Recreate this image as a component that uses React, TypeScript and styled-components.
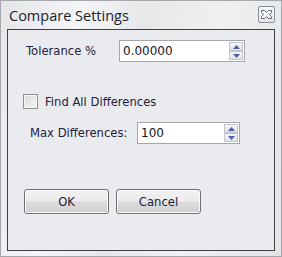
import styled, { createGlobalStyle } from 'styled-components';

const GlobalStyle = createGlobalStyle`
  html, body {
    margin: 0;
    padding: 0;
    background: #ffffff;
  }
`;

export default function App() {
  return (
    <>
      <GlobalStyle />
      <Window>
        <TitleBar>
          <Title>Compare Settings</Title>
          <CloseButton aria-label="Close">
            <svg width="13" height="11" viewBox="0 0 13 11">
              <path
                d="M1.5 1.5 H4.5 L6.5 3.5 L8.5 1.5 H11.5 V3.5 L9.5 5.5 L11.5 7.5 V9.5 H8.5 L6.5 7.5 L4.5 9.5 H1.5 V7.5 L3.5 5.5 L1.5 3.5 Z"
                fill="#fdfdfd"
                stroke="#5e6470"
                strokeWidth="1"
              />
            </svg>
          </CloseButton>
        </TitleBar>

        <Panel>
          <FieldRow $top={10} $left={18}>
            <Label $width={93}>Tolerance %</Label>
            <Spinner value="0.00000" width={126} />
          </FieldRow>

          <CheckRow>
            <CheckBox />
            <CheckText>Find All Differences</CheckText>
          </CheckRow>

          <FieldRow $top={13} $left={22}>
            <Label $width={107}>Max Differences:</Label>
            <Spinner value="100" width={103} />
          </FieldRow>

          <ButtonRow>
            <Button>OK</Button>
            <Button>Cancel</Button>
          </ButtonRow>
        </Panel>
      </Window>
    </>
  );
}

function Spinner({ value, width }: { value: string; width: number }) {
  return (
    <SpinBox style={{ width }}>
      <SpinValue>{value}</SpinValue>
      <SpinButtons>
        <SpinButton>
          <svg width="7" height="4" viewBox="0 0 7 4">
            <path d="M0 4 L3.5 0 L7 4 Z" fill="#4d5fa8" />
          </svg>
        </SpinButton>
        <SpinButton>
          <svg width="7" height="4" viewBox="0 0 7 4">
            <path d="M0 0 L7 0 L3.5 4 Z" fill="#4d5fa8" />
          </svg>
        </SpinButton>
      </SpinButtons>
    </SpinBox>
  );
}

const Window = styled.div`
  width: 282px;
  height: 257px;
  box-sizing: border-box;
  border: 1px solid #a4a8ad;
  background: linear-gradient(100deg, #e4e6e8 0%, #f4f5f6 25%, #e6e8ea 45%, #eef0f1 70%, #e2e4e6 100%);
  display: flex;
  flex-direction: column;
  padding: 0 6px 5px 6px;
`;

const TitleBar = styled.div`
  height: 28px;
  display: flex;
  align-items: flex-start;
  justify-content: space-between;
`;

const Title = styled.div`
  font-family: 'Open Sans', 'Noto Sans', sans-serif;
  font-size: 14.5px;
  color: #1c1c2c;
  margin: 6px 0 0 2px;
  line-height: 18px;
`;

const CloseButton = styled.div`
  width: 17px;
  height: 17px;
  box-sizing: border-box;
  margin-top: 5px;
  border: 1px solid #8a8e96;
  border-radius: 2px;
  background: linear-gradient(#f6f7f8, #e2e4e7);
  display: flex;
  align-items: center;
  justify-content: center;
`;

const Panel = styled.div`
  flex: 1;
  border: 1px solid #3e4044;
  background: #e9ebee;
  display: flex;
  flex-direction: column;
`;

const FieldRow = styled.div<{ $top: number; $left: number }>`
  display: flex;
  align-items: center;
  margin: ${(p) => p.$top}px 0 0 ${(p) => p.$left}px;
`;

const Label = styled.div<{ $width: number }>`
  width: ${(p) => p.$width}px;
  font-family: 'DejaVu Sans', 'Liberation Sans', sans-serif;
  font-size: 11.6px;
  color: #1e2040;
`;

const SpinBox = styled.div`
  height: 22px;
  box-sizing: border-box;
  border: 1px solid #a3a6ab;
  background: #ffffff;
  display: flex;
  align-items: center;
  padding: 0 1px 0 3px;
`;

const SpinValue = styled.div`
  flex: 1;
  font-family: 'DejaVu Sans', 'Liberation Sans', sans-serif;
  font-size: 12px;
  color: #141428;
`;

const SpinButtons = styled.div`
  display: flex;
  flex-direction: column;
`;

const SpinButton = styled.div`
  width: 14px;
  height: 9px;
  box-sizing: border-box;
  border: 1px solid #c2c6cc;
  background: linear-gradient(#f4f5f7, #dfe2e7);
  display: flex;
  align-items: center;
  justify-content: center;
`;

const CheckRow = styled.div`
  display: flex;
  align-items: center;
  gap: 7px;
  margin: 32px 0 0 15px;
`;

const CheckBox = styled.div`
  width: 15px;
  height: 15px;
  box-sizing: border-box;
  border: 1px solid #8e8f8f;
  background: linear-gradient(135deg, #d8d9da, #f6f6f6);
  box-shadow: inset 0 0 0 1px #f4f4f4;
`;

const CheckText = styled.div`
  font-family: 'DejaVu Sans', 'Liberation Sans', sans-serif;
  font-size: 11.6px;
  color: #1e2040;
`;

const ButtonRow = styled.div`
  display: flex;
  gap: 7px;
  margin: 45px 0 0 16px;
`;

const Button = styled.div`
  width: 85px;
  height: 25px;
  box-sizing: border-box;
  border: 1px solid #707070;
  border-radius: 3px;
  background: linear-gradient(#f2f2f2 0%, #ebebeb 48%, #dddddd 52%, #cfcfcf 100%);
  box-shadow: inset 0 0 0 1px #fbfbfb;
  display: flex;
  align-items: center;
  justify-content: center;
  font-family: 'DejaVu Sans', 'Liberation Sans', sans-serif;
  font-size: 11.6px;
  color: #1e2040;
`;
